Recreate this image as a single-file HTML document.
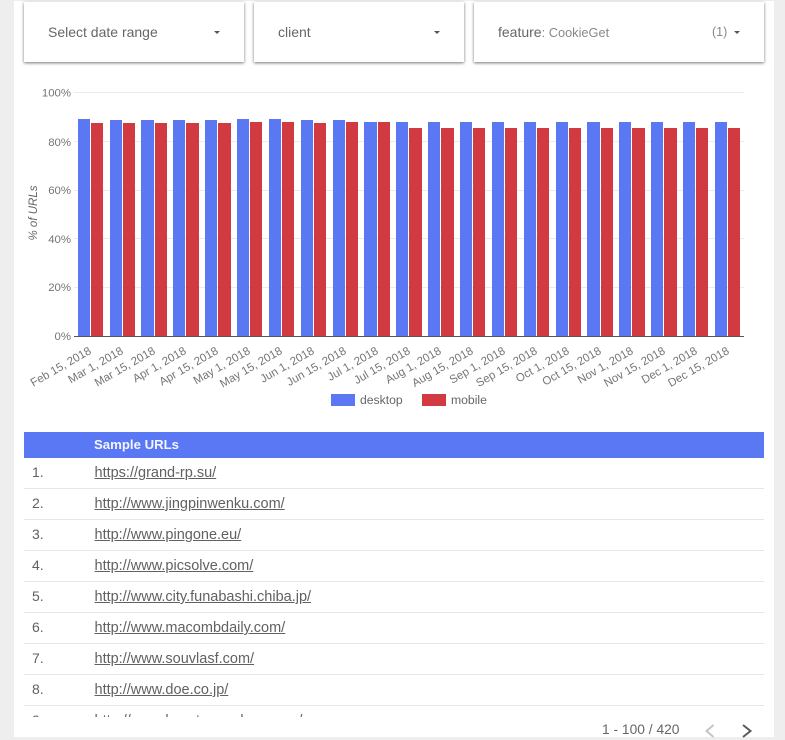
<!DOCTYPE html>
<html>
<head>
<meta charset="utf-8">
<style>
html,body{margin:0;padding:0;background:#eeeeee;}
body{width:785px;height:740px;position:relative;overflow:hidden;font-family:"Liberation Sans",sans-serif;color:#616161;}
.page{position:absolute;left:14px;top:1px;width:760px;height:736px;background:#fff;}
.card{position:absolute;top:2px;height:60px;background:#fff;box-shadow:0 1px 3px rgba(0,0,0,.55);font-size:14px;line-height:61px;color:#666;}
.card span.t{position:absolute;top:0;white-space:nowrap;}
.caret{position:absolute;top:29px;width:0;height:0;border-left:3.5px solid transparent;border-right:3.5px solid transparent;border-top:3.5px solid #555;}
svg.chart{position:absolute;left:0;top:0;}
.th{position:absolute;left:24px;top:432px;width:740px;height:26px;background:#5a78f4;color:#f3f5ff;font-weight:bold;font-size:13.2px;line-height:25px;}
.th span{position:absolute;left:70px;}
.rows{position:absolute;left:24px;top:458px;width:740px;height:259px;overflow:hidden;}
.r{position:absolute;left:0;width:740px;height:30px;border-bottom:1px solid #e6e6e6;font-size:14.5px;color:#616161;}
.r b{position:absolute;left:8px;top:5px;font-weight:normal;line-height:18px;font-size:14px;}
.r a{position:absolute;left:70.5px;top:6px;line-height:18px;color:#616161;text-decoration:underline;white-space:nowrap;}
.pg{position:absolute;left:602px;top:721px;font-size:13.8px;line-height:18px;color:#666;white-space:nowrap;}
</style>
</head>
<body>
<div class="page"></div>

<div class="card" style="left:24px;width:220px"><span class="t" style="left:24px">Select date range</span><i class="caret" style="left:190px"></i></div>
<div class="card" style="left:254px;width:210px"><span class="t" style="left:24px">client</span><i class="caret" style="left:180px"></i></div>
<div class="card" style="left:474px;width:290px"><span class="t" style="left:24px">feature<span style="color:#888;font-size:12.8px">: CookieGet</span></span><span class="t" style="left:238px;color:#888;font-size:12.5px">(1)</span><i class="caret" style="left:260px"></i></div>

<svg class="chart" width="785" height="420" viewBox="0 0 785 420" xmlns="http://www.w3.org/2000/svg" font-family="Liberation Sans, sans-serif">
<g stroke="#ebebeb" stroke-width="1">
<line x1="74" x2="744" y1="92.5" y2="92.5"/>
<line x1="74" x2="744" y1="141.5" y2="141.5"/>
<line x1="74" x2="744" y1="190.5" y2="190.5"/>
<line x1="74" x2="744" y1="238.5" y2="238.5"/>
<line x1="74" x2="744" y1="287.5" y2="287.5"/>
</g>
<g font-size="11.4" fill="#757575" text-anchor="end">
<text x="71" y="96.5">100%</text>
<text x="71" y="146">80%</text>
<text x="71" y="194">60%</text>
<text x="71" y="243">40%</text>
<text x="71" y="291">20%</text>
<text x="71" y="340">0%</text>
</g>
<text transform="translate(37,213) rotate(-90)" font-size="11.5" font-style="italic" fill="#666" text-anchor="middle">% of URLs</text>
<g fill="#5a78f4">
<rect x="78" y="119" width="12" height="217"/>
<rect x="110" y="120" width="12" height="216"/>
<rect x="141" y="120" width="13" height="216"/>
<rect x="173" y="120" width="12" height="216"/>
<rect x="205" y="120" width="12" height="216"/>
<rect x="237" y="119" width="12" height="217"/>
<rect x="269" y="119" width="12" height="217"/>
<rect x="301" y="120" width="12" height="216"/>
<rect x="333" y="120" width="12" height="216"/>
<rect x="364" y="122" width="13" height="214"/>
<rect x="396" y="122" width="12" height="214"/>
<rect x="428" y="122" width="12" height="214"/>
<rect x="460" y="122" width="12" height="214"/>
<rect x="492" y="122" width="12" height="214"/>
<rect x="524" y="122" width="12" height="214"/>
<rect x="556" y="122" width="12" height="214"/>
<rect x="587" y="122" width="13" height="214"/>
<rect x="619" y="122" width="12" height="214"/>
<rect x="651" y="122" width="12" height="214"/>
<rect x="683" y="122" width="12" height="214"/>
<rect x="715" y="122" width="12" height="214"/>
</g>
<g fill="#d13a40">
<rect x="91" y="123" width="12" height="213"/>
<rect x="123" y="123" width="12" height="213"/>
<rect x="155" y="123" width="12" height="213"/>
<rect x="186" y="123" width="13" height="213"/>
<rect x="218" y="123" width="13" height="213"/>
<rect x="250" y="122" width="12" height="214"/>
<rect x="282" y="122" width="12" height="214"/>
<rect x="314" y="123" width="12" height="213"/>
<rect x="346" y="122" width="12" height="214"/>
<rect x="378" y="122" width="12" height="214"/>
<rect x="409" y="128" width="13" height="208"/>
<rect x="441" y="128" width="13" height="208"/>
<rect x="473" y="128" width="12" height="208"/>
<rect x="505" y="128" width="12" height="208"/>
<rect x="537" y="128" width="12" height="208"/>
<rect x="569" y="128" width="12" height="208"/>
<rect x="601" y="128" width="12" height="208"/>
<rect x="632" y="128" width="13" height="208"/>
<rect x="664" y="128" width="13" height="208"/>
<rect x="696" y="128" width="12" height="208"/>
<rect x="728" y="128" width="12" height="208"/>
</g>
<rect x="74" y="336" width="670" height="1" fill="#555"/>
<g font-size="11.5" fill="#757575" text-anchor="end">
<text transform="translate(92,353) rotate(-30)">Feb 15, 2018</text>
<text transform="translate(124,353) rotate(-30)">Mar 1, 2018</text>
<text transform="translate(156,353) rotate(-30)">Mar 15, 2018</text>
<text transform="translate(187,353) rotate(-30)">Apr 1, 2018</text>
<text transform="translate(219,353) rotate(-30)">Apr 15, 2018</text>
<text transform="translate(251,353) rotate(-30)">May 1, 2018</text>
<text transform="translate(283,353) rotate(-30)">May 15, 2018</text>
<text transform="translate(315,353) rotate(-30)">Jun 1, 2018</text>
<text transform="translate(347,353) rotate(-30)">Jun 15, 2018</text>
<text transform="translate(379,353) rotate(-30)">Jul 1, 2018</text>
<text transform="translate(411,353) rotate(-30)">Jul 15, 2018</text>
<text transform="translate(442,353) rotate(-30)">Aug 1, 2018</text>
<text transform="translate(474,353) rotate(-30)">Aug 15, 2018</text>
<text transform="translate(506,353) rotate(-30)">Sep 1, 2018</text>
<text transform="translate(538,353) rotate(-30)">Sep 15, 2018</text>
<text transform="translate(570,353) rotate(-30)">Oct 1, 2018</text>
<text transform="translate(602,353) rotate(-30)">Oct 15, 2018</text>
<text transform="translate(634,353) rotate(-30)">Nov 1, 2018</text>
<text transform="translate(666,353) rotate(-30)">Nov 15, 2018</text>
<text transform="translate(698,353) rotate(-30)">Dec 1, 2018</text>
<text transform="translate(730,353) rotate(-30)">Dec 15, 2018</text>
</g>
<rect x="331" y="394" width="24" height="12" fill="#5a78f4"/>
<text x="360" y="404" font-size="12.2" fill="#666">desktop</text>
<rect x="422" y="394" width="24" height="12" fill="#d13a40"/>
<text x="451" y="404" font-size="12.2" fill="#666">mobile</text>
</svg>

<div class="th"><span>Sample URLs</span></div>
<div class="rows">
<div class="r" style="top:0"><b>1.</b><a>https://grand-rp.su/</a></div>
<div class="r" style="top:31px"><b>2.</b><a>http://www.jingpinwenku.com/</a></div>
<div class="r" style="top:62px"><b>3.</b><a>http://www.pingone.eu/</a></div>
<div class="r" style="top:93px"><b>4.</b><a>http://www.picsolve.com/</a></div>
<div class="r" style="top:124px"><b>5.</b><a>http://www.city.funabashi.chiba.jp/</a></div>
<div class="r" style="top:155px"><b>6.</b><a>http://www.macombdaily.com/</a></div>
<div class="r" style="top:186px"><b>7.</b><a>http://www.souvlasf.com/</a></div>
<div class="r" style="top:217px"><b>8.</b><a>http://www.doe.co.jp/</a></div>
<div class="r" style="top:248px;border-bottom:0"><b>9.</b><a>http://www.bossteamsdeco.com/</a></div>
</div>

<div class="pg">1 - 100 / 420</div>
<svg style="position:absolute;left:700px;top:720px" width="60" height="20" viewBox="0 0 60 20" xmlns="http://www.w3.org/2000/svg" fill="none" stroke-width="2">
<path d="M13.5 5 L6.5 11 L13.5 17" stroke="#c4c4c4"/>
<path d="M43 5 L50.5 11 L43 17" stroke="#5a5a5a"/>
</svg>
</body>
</html>
